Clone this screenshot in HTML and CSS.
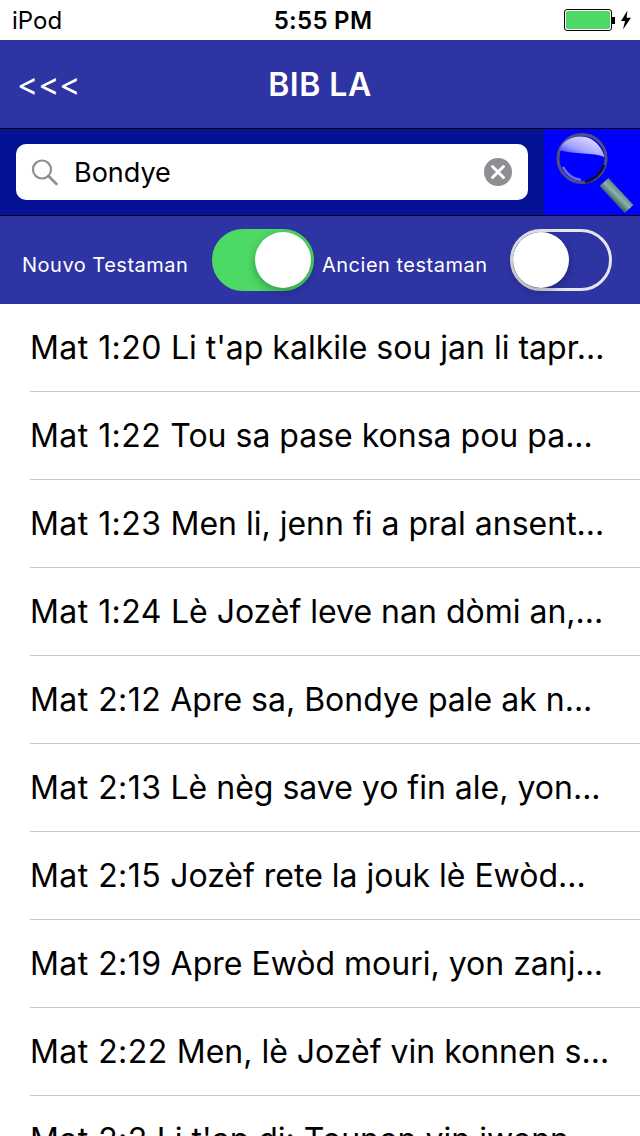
FILE: index.html
```html
<!DOCTYPE html>
<html lang="ht">
<head>
  <meta charset="UTF-8" />
  <meta name="viewport" content="width=device-width, initial-scale=1.0"/>
  <title>Bib la</title>
  <link rel="stylesheet" href="styles.css">
</head>
<body>

  <div class="status-bar">
    <span class="carrier">iPod</span>
    <span class="clock">5:55 PM</span>
    <div class="power">
      <div class="battery"><div class="battery-fill"></div></div>
      <div class="battery-tip"></div>
      <svg class="bolt" width="12" height="20" viewBox="0 0 12 20">
        <path d="M7.5 0.5 L1 11 H5 L3 19.5 L11 7.8 H6.6 Z" fill="#000"/>
      </svg>
    </div>
  </div>

  <header class="nav">
    <span class="back">&lt;&lt;&lt;</span>
    <span class="title">BIB LA</span>
  </header>

  <div class="search-row">
    <div class="search-bar">
      <div class="search-field">
        <svg class="search-icon" width="28" height="28" viewBox="0 0 28 28">
          <circle cx="12" cy="11.5" r="9" fill="none" stroke="#8e8e93" stroke-width="2.2"/>
          <path d="M18.5 18 L26.5 26" stroke="#8e8e93" stroke-width="2.6" stroke-linecap="round"/>
        </svg>
        <span class="search-text">Bondye</span>
        <svg class="clear-icon" width="28" height="28" viewBox="0 0 28 28">
          <circle cx="14" cy="14" r="14" fill="#8e8e93"/>
          <path d="M8.5 8.5 L19.5 19.5 M19.5 8.5 L8.5 19.5" stroke="#fff" stroke-width="3" stroke-linecap="round"/>
        </svg>
      </div>
    </div>
    <div class="search-button">
      <svg width="96" height="86" viewBox="0 0 96 86">
        <defs>
          <linearGradient id="handle" gradientUnits="userSpaceOnUse" x1="68" y1="70" x2="78" y2="60">
            <stop offset="0" stop-color="#3f6666"/>
            <stop offset="0.45" stop-color="#8fb0ab"/>
            <stop offset="1" stop-color="#4d7474"/>
          </linearGradient>
          <linearGradient id="shine" x1="0.85" y1="0.1" x2="0.1" y2="0.9">
            <stop offset="0" stop-color="#e0e0ff"/>
            <stop offset="0.6" stop-color="#a4a4ff"/>
            <stop offset="1" stop-color="#4040ff"/>
          </linearGradient>
        </defs>
        <path d="M60 53 L85 80" stroke="url(#handle)" stroke-width="12"/>
        <circle cx="38" cy="29.5" r="24" fill="#0000ff" stroke="#50507e" stroke-width="3"/>
        <path d="M15.5 21 C20 5 52 -1 60.5 28 C50 23 30 26 15.5 21 Z" fill="url(#shine)"/>
        <path d="M19 38 C23 46 30 50 37 51" stroke="#6a6aff" stroke-width="2.5" fill="none"/>
        <path d="M60 36 C56 46 49 51 41 53" stroke="#101040" stroke-width="3" fill="none"/>
      </svg>
    </div>
  </div>

  <div class="filters">
    <div class="filter">
      <span class="filter-label">Nouvo Testaman</span>
      <div class="switch on"><div class="knob"></div></div>
    </div>
    <div class="filter">
      <span class="filter-label">Ancien testaman</span>
      <div class="switch"><div class="knob"></div></div>
    </div>
  </div>

  <ul class="results">
    <li><span class="verse">Mat 1:20</span> Li t'ap kalkile sou jan li tapr...</li>
    <li><span class="verse">Mat 1:22</span> Tou sa pase konsa pou pa...</li>
    <li><span class="verse">Mat 1:23</span> Men li, jenn fi a pral ansent...</li>
    <li><span class="verse">Mat 1:24</span> Lè Jozèf leve nan dòmi an,...</li>
    <li><span class="verse">Mat 2:12</span> Apre sa, Bondye pale ak n...</li>
    <li><span class="verse">Mat 2:13</span> Lè nèg save yo fin ale, yon...</li>
    <li><span class="verse">Mat 2:15</span> Jozèf rete la jouk lè Ewòd...</li>
    <li><span class="verse">Mat 2:19</span> Apre Ewòd mouri, yon zanj...</li>
    <li><span class="verse">Mat 2:22</span> Men, lè Jozèf vin konnen s...</li>
    <li><span class="verse">Mat 2:2</span> Li t'ap di: Tounen vin jwenn...</li>
  </ul>

</body>
</html>
```

FILE: styles.css
```css
html, body {
  margin: 0;
  height: 1136px;
  overflow: hidden;
}

body {
  font-family: Inter, "Liberation Sans", sans-serif;
  background-color: #fff;
  color: #000;
}

.status-bar {
  height: 40px;
  display: grid;
  grid-template-columns: 1fr auto 1fr;
  align-items: center;
  padding: 0 8px 0 12px;
  font-size: 24px;
}

.clock {
  margin-left: 2px;
  font-weight: 600;
  letter-spacing: 0.3px;
}

.power {
  display: flex;
  align-items: center;
  justify-content: flex-end;
}

.battery {
  width: 44px;
  height: 18px;
  border: 1px solid #000;
  border-radius: 3px;
  padding: 1px;
}

.battery-fill {
  height: 100%;
  background-color: #4cd964;
  border-radius: 2px;
}

.battery-tip {
  width: 3px;
  height: 7px;
  background-color: #000;
  margin-right: 5px;
}

.nav {
  height: 88px;
  background-color: #2e34a3;
  color: #fff;
  display: grid;
  grid-template-columns: 1fr auto 1fr;
  align-items: center;
  padding: 0 17px;
  box-sizing: border-box;
}

.back {
  font-size: 32px;
}

.title {
  font-size: 32px;
  font-weight: 600;
  letter-spacing: 0.5px;
}

.search-row {
  display: flex;
  height: 88px;
  border-top: 1px solid #000;
  border-bottom: 1px solid #000;
  box-sizing: border-box;
}

.search-bar {
  flex: 1;
  background-color: #051196;
  padding: 15px 16px;
}

.search-field {
  height: 56px;
  background-color: #fff;
  border-radius: 10px;
  display: flex;
  align-items: center;
  padding: 0 16px 0 14px;
  box-sizing: border-box;
}

.search-text {
  flex: 1;
  font-size: 27px;
  margin-left: 16px;
}

.search-button {
  width: 96px;
  background-color: #0000ff;
}

.search-button svg {
  display: block;
}

.filters {
  height: 88px;
  background-color: #2e34a3;
  display: flex;
  align-items: center;
  gap: 8px;
  padding-left: 22px;
}

.filter {
  display: flex;
  align-items: center;
}

.filter-label {
  width: 190px;
  padding-top: 10px;
  color: #fff;
  font-size: 20px;
  letter-spacing: 0.5px;
}

.filter + .filter .filter-label {
  width: 188px;
}

.switch {
  width: 102px;
  height: 62px;
  border-radius: 31px;
  border: 3px solid #e5e5ea;
  box-sizing: border-box;
}

.switch.on {
  background-color: #4cd964;
  border-color: #4cd964;
}

.knob {
  width: 56px;
  height: 56px;
  border-radius: 50%;
  background-color: #fff;
  box-shadow: 0 3px 8px rgba(0,0,0,0.3);
}

.switch.on .knob {
  margin-left: auto;
}

.results {
  list-style: none;
  margin: 0;
  padding: 0;
}

.results li {
  height: 88px;
  margin-left: 30px;
  line-height: 87px;
  font-size: 32px;
  font-weight: 375;
  white-space: nowrap;
  overflow: hidden;
  box-sizing: border-box;
  border-bottom: 1px solid #c8c7cc;
}

.verse {
  letter-spacing: 0.45px;
}
```
